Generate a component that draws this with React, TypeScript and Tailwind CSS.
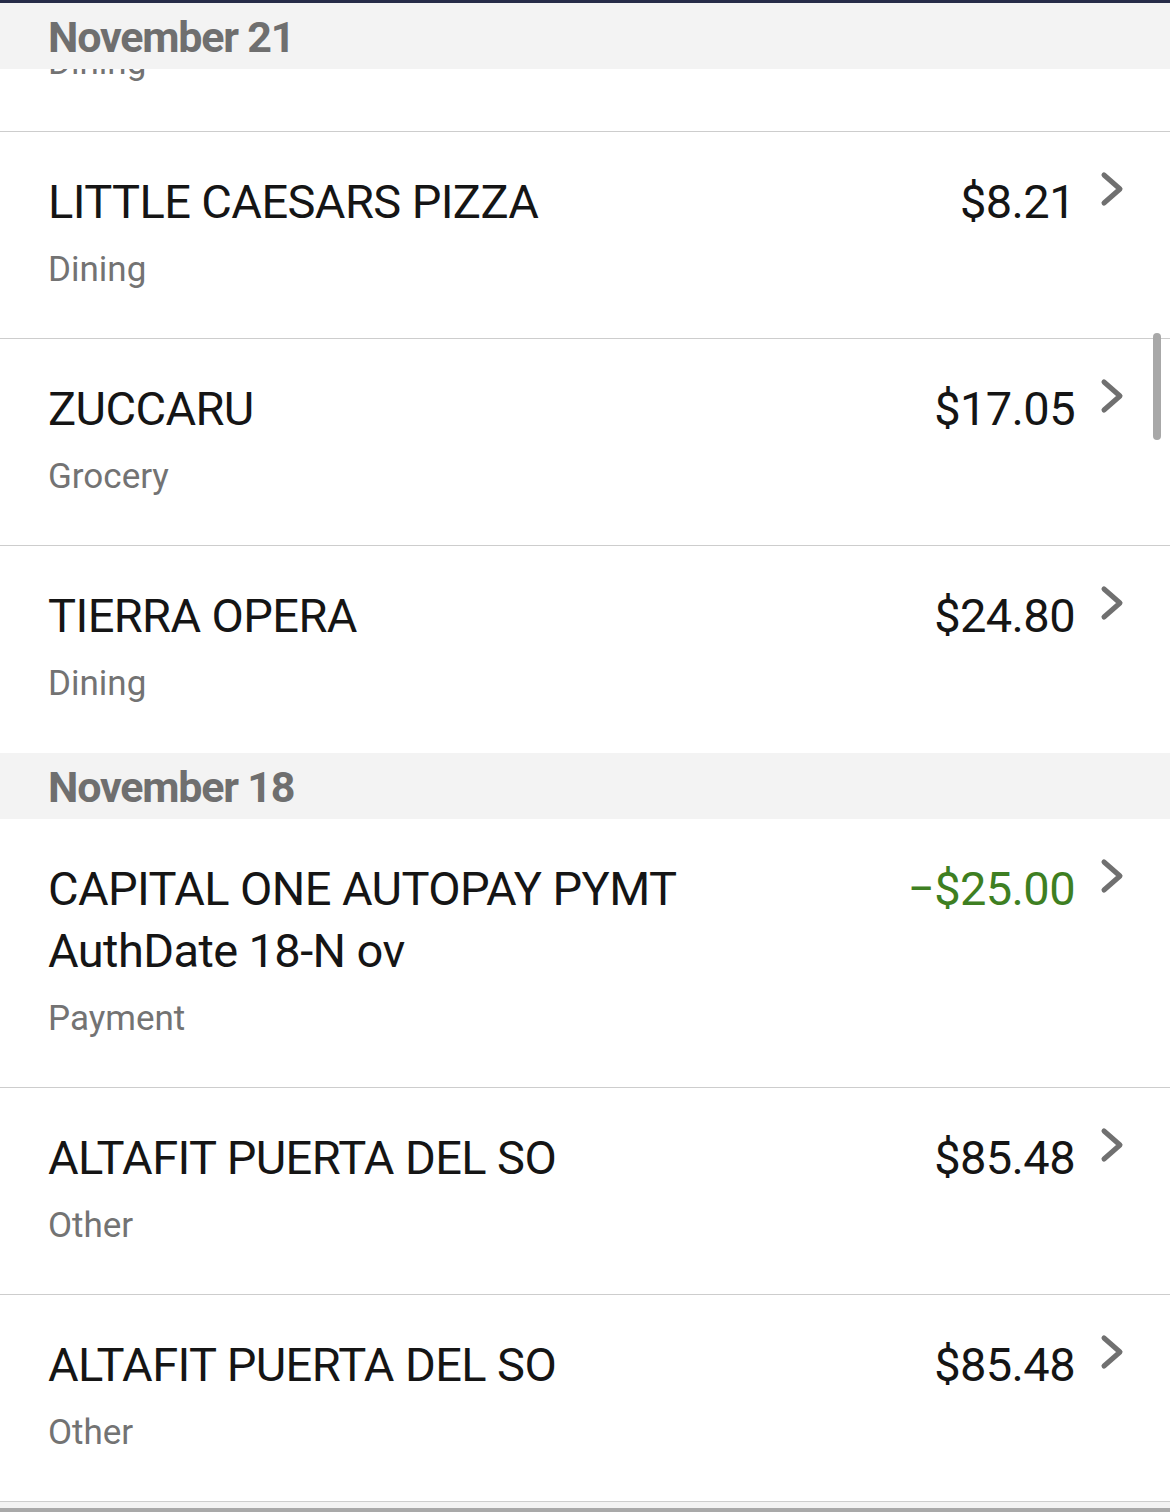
import React from "react";

type Txn = {
  name: string[];
  category: string;
  amount: string;
  credit?: boolean;
  last?: boolean;
  ghost?: boolean;
};

const Chevron = ({ hidden }: { hidden?: boolean }) => (
  <svg width="24" height="36" viewBox="0 0 24 36" className={`ml-[25px] shrink-0 ${hidden ? "invisible" : ""}`}>
    <polyline
      points="4,4 20,18 4,32"
      fill="none"
      stroke="#707070"
      strokeWidth="5"
      strokeLinecap="round"
      strokeLinejoin="round"
    />
  </svg>
);

const Row = ({ t }: { t: Txn }) => (
  <div
    className={`flex items-start pl-[48px] pr-[46px] pt-[39px] pb-[43px] border-b ${
      t.last ? "border-transparent" : "border-[#cdcdcd]"
    }`}
  >
    <div className="flex-1 min-w-0">
      {t.name.map((line, i) => (
        <div
          key={i}
          className={`h-[62px] text-[47px] leading-[62px] tracking-[-0.6px] text-[#151515] whitespace-nowrap ${
            t.ghost ? "invisible" : ""
          }`}
        >
          {line}
        </div>
      ))}
      <div className="mt-[12px] text-[35px] leading-[50px] text-[#737373]">{t.category}</div>
    </div>
    <div
      className={`text-[47px] leading-[62px] tracking-[-0.6px] ${
        t.credit ? "text-[#3e7f22]" : "text-[#151515]"
      } ${t.ghost ? "invisible" : ""}`}
    >
      {t.amount}
    </div>
    <Chevron hidden={t.ghost} />
  </div>
);

const DateHeader = ({ label, className = "" }: { label: string; className?: string }) => (
  <div className={`h-[66px] bg-[#f3f3f3] pl-[48px] pt-[3px] ${className}`}>
    <div className="text-[43px] leading-[63px] font-bold tracking-[-1.2px] text-[#6f6f6f]">{label}</div>
  </div>
);

const nov21: Txn[] = [
  { name: ["LITTLE CAESARS PIZZA"], category: "Dining", amount: "$8.21" },
  { name: ["ZUCCARU"], category: "Grocery", amount: "$17.05" },
  { name: ["TIERRA OPERA"], category: "Dining", amount: "$24.80", last: true },
];

const nov18: Txn[] = [
  {
    name: ["CAPITAL ONE AUTOPAY PYMT", "AuthDate 18-N ov"],
    category: "Payment",
    amount: "\u2212$25.00",
    credit: true,
  },
  { name: ["ALTAFIT PUERTA DEL SO"], category: "Other", amount: "$85.48" },
  { name: ["ALTAFIT PUERTA DEL SO"], category: "Other", amount: "$85.48" },
];

export default function App() {
  return (
    <div
      className="w-[1170px] h-[1512px] bg-white overflow-hidden flex flex-col"
      style={{ fontFamily: "Roboto, 'Noto Sans', sans-serif" }}
    >
      <div className="h-[3px] bg-[#262c48] shrink-0" />
      <div className="relative flex-1 overflow-hidden">
        {/* sticky date header sits over the scrolled list */}
        <DateHeader label="November 21" className="absolute top-0 left-0 right-0 z-10" />
        <div className="mt-[-78px]">
          <Row t={{ name: ["\u00a0"], category: "Dining", amount: "\u00a0", ghost: true }} />
          {nov21.map((t, i) => (
            <Row key={i} t={t} />
          ))}
          <DateHeader label="November 18" />
          {nov18.map((t, i) => (
            <Row key={i} t={t} />
          ))}
          <div className="h-[6px] bg-[#f3f3f3]" />
          <div className="h-[4px] bg-[#a9a9a9]" />
        </div>
        {/* scrollbar */}
        <div className="absolute left-[1153px] top-[330px] w-[8px] h-[107px] rounded-full bg-[#a8a8a8]" />
      </div>
    </div>
  );
}
